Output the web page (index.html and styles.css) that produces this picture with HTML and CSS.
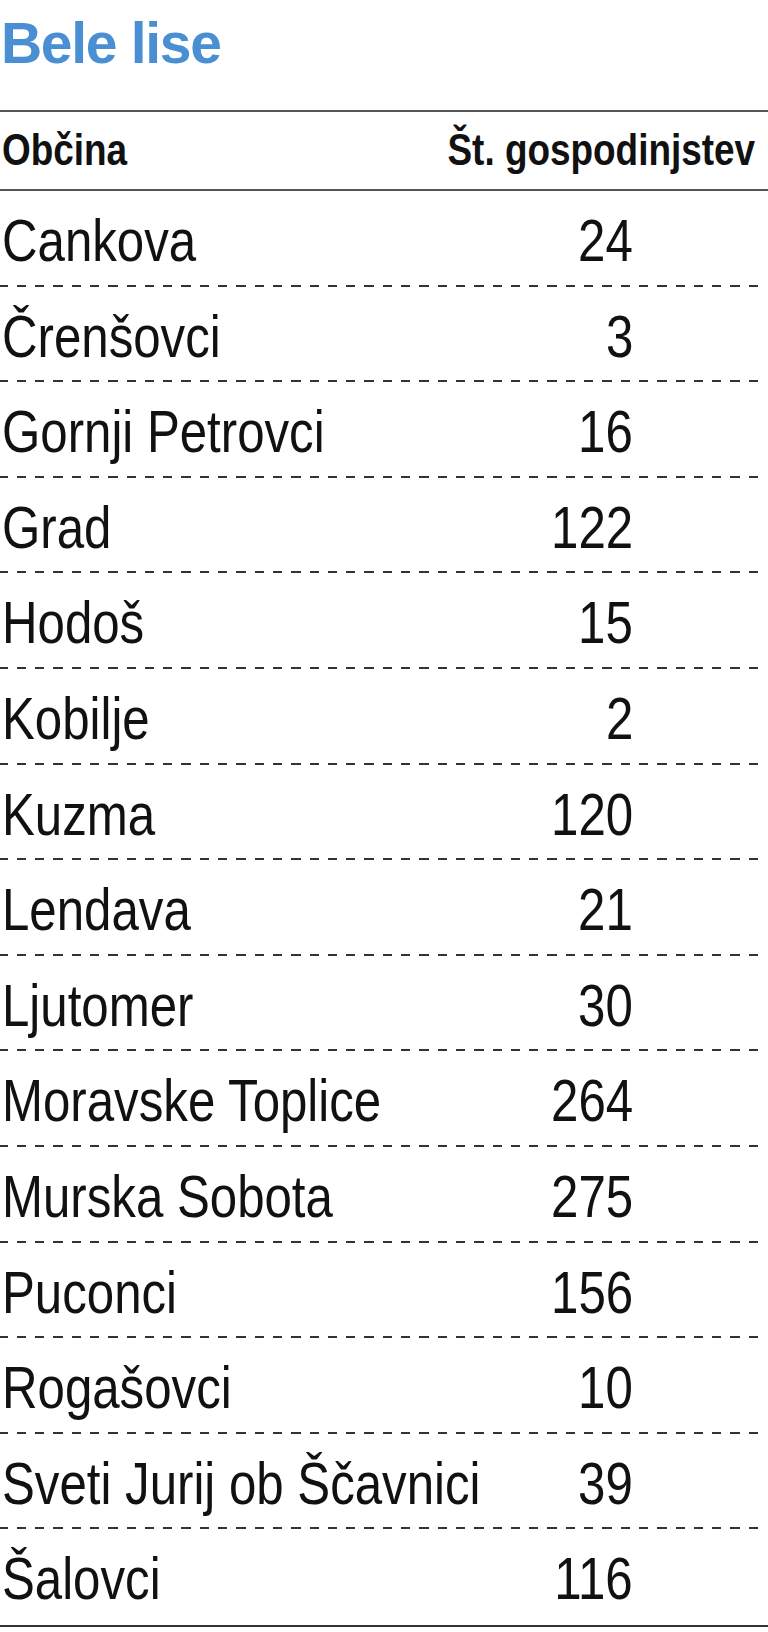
FILE: index.html
```html
<!DOCTYPE html>
<html lang="sl">
<head>
<meta charset="utf-8">
<title>Bele lise</title>
<link rel="stylesheet" href="styles.css">
</head>
<body>
<div class="page">
  <h1 class="title">Bele lise</h1>
  <div class="table">
    <div class="head">
      <span class="name">Občina</span>
      <span class="count">Št. gospodinjstev</span>
    </div>
    <div class="row"><span class="name">Cankova</span><span class="num">24</span></div>
    <div class="row"><span class="name">Črenšovci</span><span class="num">3</span></div>
    <div class="row"><span class="name">Gornji Petrovci</span><span class="num">16</span></div>
    <div class="row"><span class="name">Grad</span><span class="num">122</span></div>
    <div class="row"><span class="name">Hodoš</span><span class="num">15</span></div>
    <div class="row"><span class="name">Kobilje</span><span class="num">2</span></div>
    <div class="row"><span class="name">Kuzma</span><span class="num">120</span></div>
    <div class="row"><span class="name">Lendava</span><span class="num">21</span></div>
    <div class="row"><span class="name">Ljutomer</span><span class="num">30</span></div>
    <div class="row"><span class="name">Moravske Toplice</span><span class="num">264</span></div>
    <div class="row"><span class="name">Murska Sobota</span><span class="num">275</span></div>
    <div class="row"><span class="name">Puconci</span><span class="num">156</span></div>
    <div class="row"><span class="name">Rogašovci</span><span class="num">10</span></div>
    <div class="row"><span class="name">Sveti Jurij ob Ščavnici</span><span class="num">39</span></div>
    <div class="row last"><span class="name">Šalovci</span><span class="num">116</span></div>
  </div>
</div>
</body>
</html>
```

FILE: styles.css
```css
html, body {
  margin: 0;
  padding: 0;
  background: #ffffff;
}

.page {
  width: 768px;
  font-family: "Liberation Sans", Arial, sans-serif;
  color: #111111;
}

.title {
  margin: 0;
  padding: 15px 0 38px 1px;
  height: 57px;
  font-weight: bold;
  font-size: 57px;
  line-height: 57px;
  letter-spacing: -1.3px;
  color: #4a8fd3;
}

.table {
  display: flex;
  flex-direction: column;
}

.head {
  display: grid;
  grid-template-columns: minmax(0, 1fr) auto;
  box-sizing: border-box;
  height: 81px;
  border-top: 2px solid #555555;
  border-bottom: 2px solid #555555;
  padding: 0 13px 2px 2px;
  font-weight: bold;
  font-size: 45px;
  line-height: 75px;
  white-space: nowrap;
}

.name {
  display: inline-block;
  justify-self: start;
  transform: scaleX(0.82);
  transform-origin: left center;
}

.count,
.num {
  display: inline-block;
  justify-self: end;
  transform: scaleX(0.82);
  transform-origin: right center;
  text-align: right;
}

.row {
  display: grid;
  grid-template-columns: minmax(0, 1fr) auto;
  box-sizing: border-box;
  height: 95.6px;
  padding: 6px 135px 0 2px;
  font-size: 60px;
  line-height: 88px;
  white-space: nowrap;
  background-image: repeating-linear-gradient(to right, #333333 0 9.3px, transparent 9.3px 18.3px);
  background-size: 100% 2px;
  background-position: -1.6px 100%;
  background-repeat: no-repeat;
}

.row.last {
  background: none;
  height: 97.6px;
  border-bottom: 2px solid #333333;
}
```
